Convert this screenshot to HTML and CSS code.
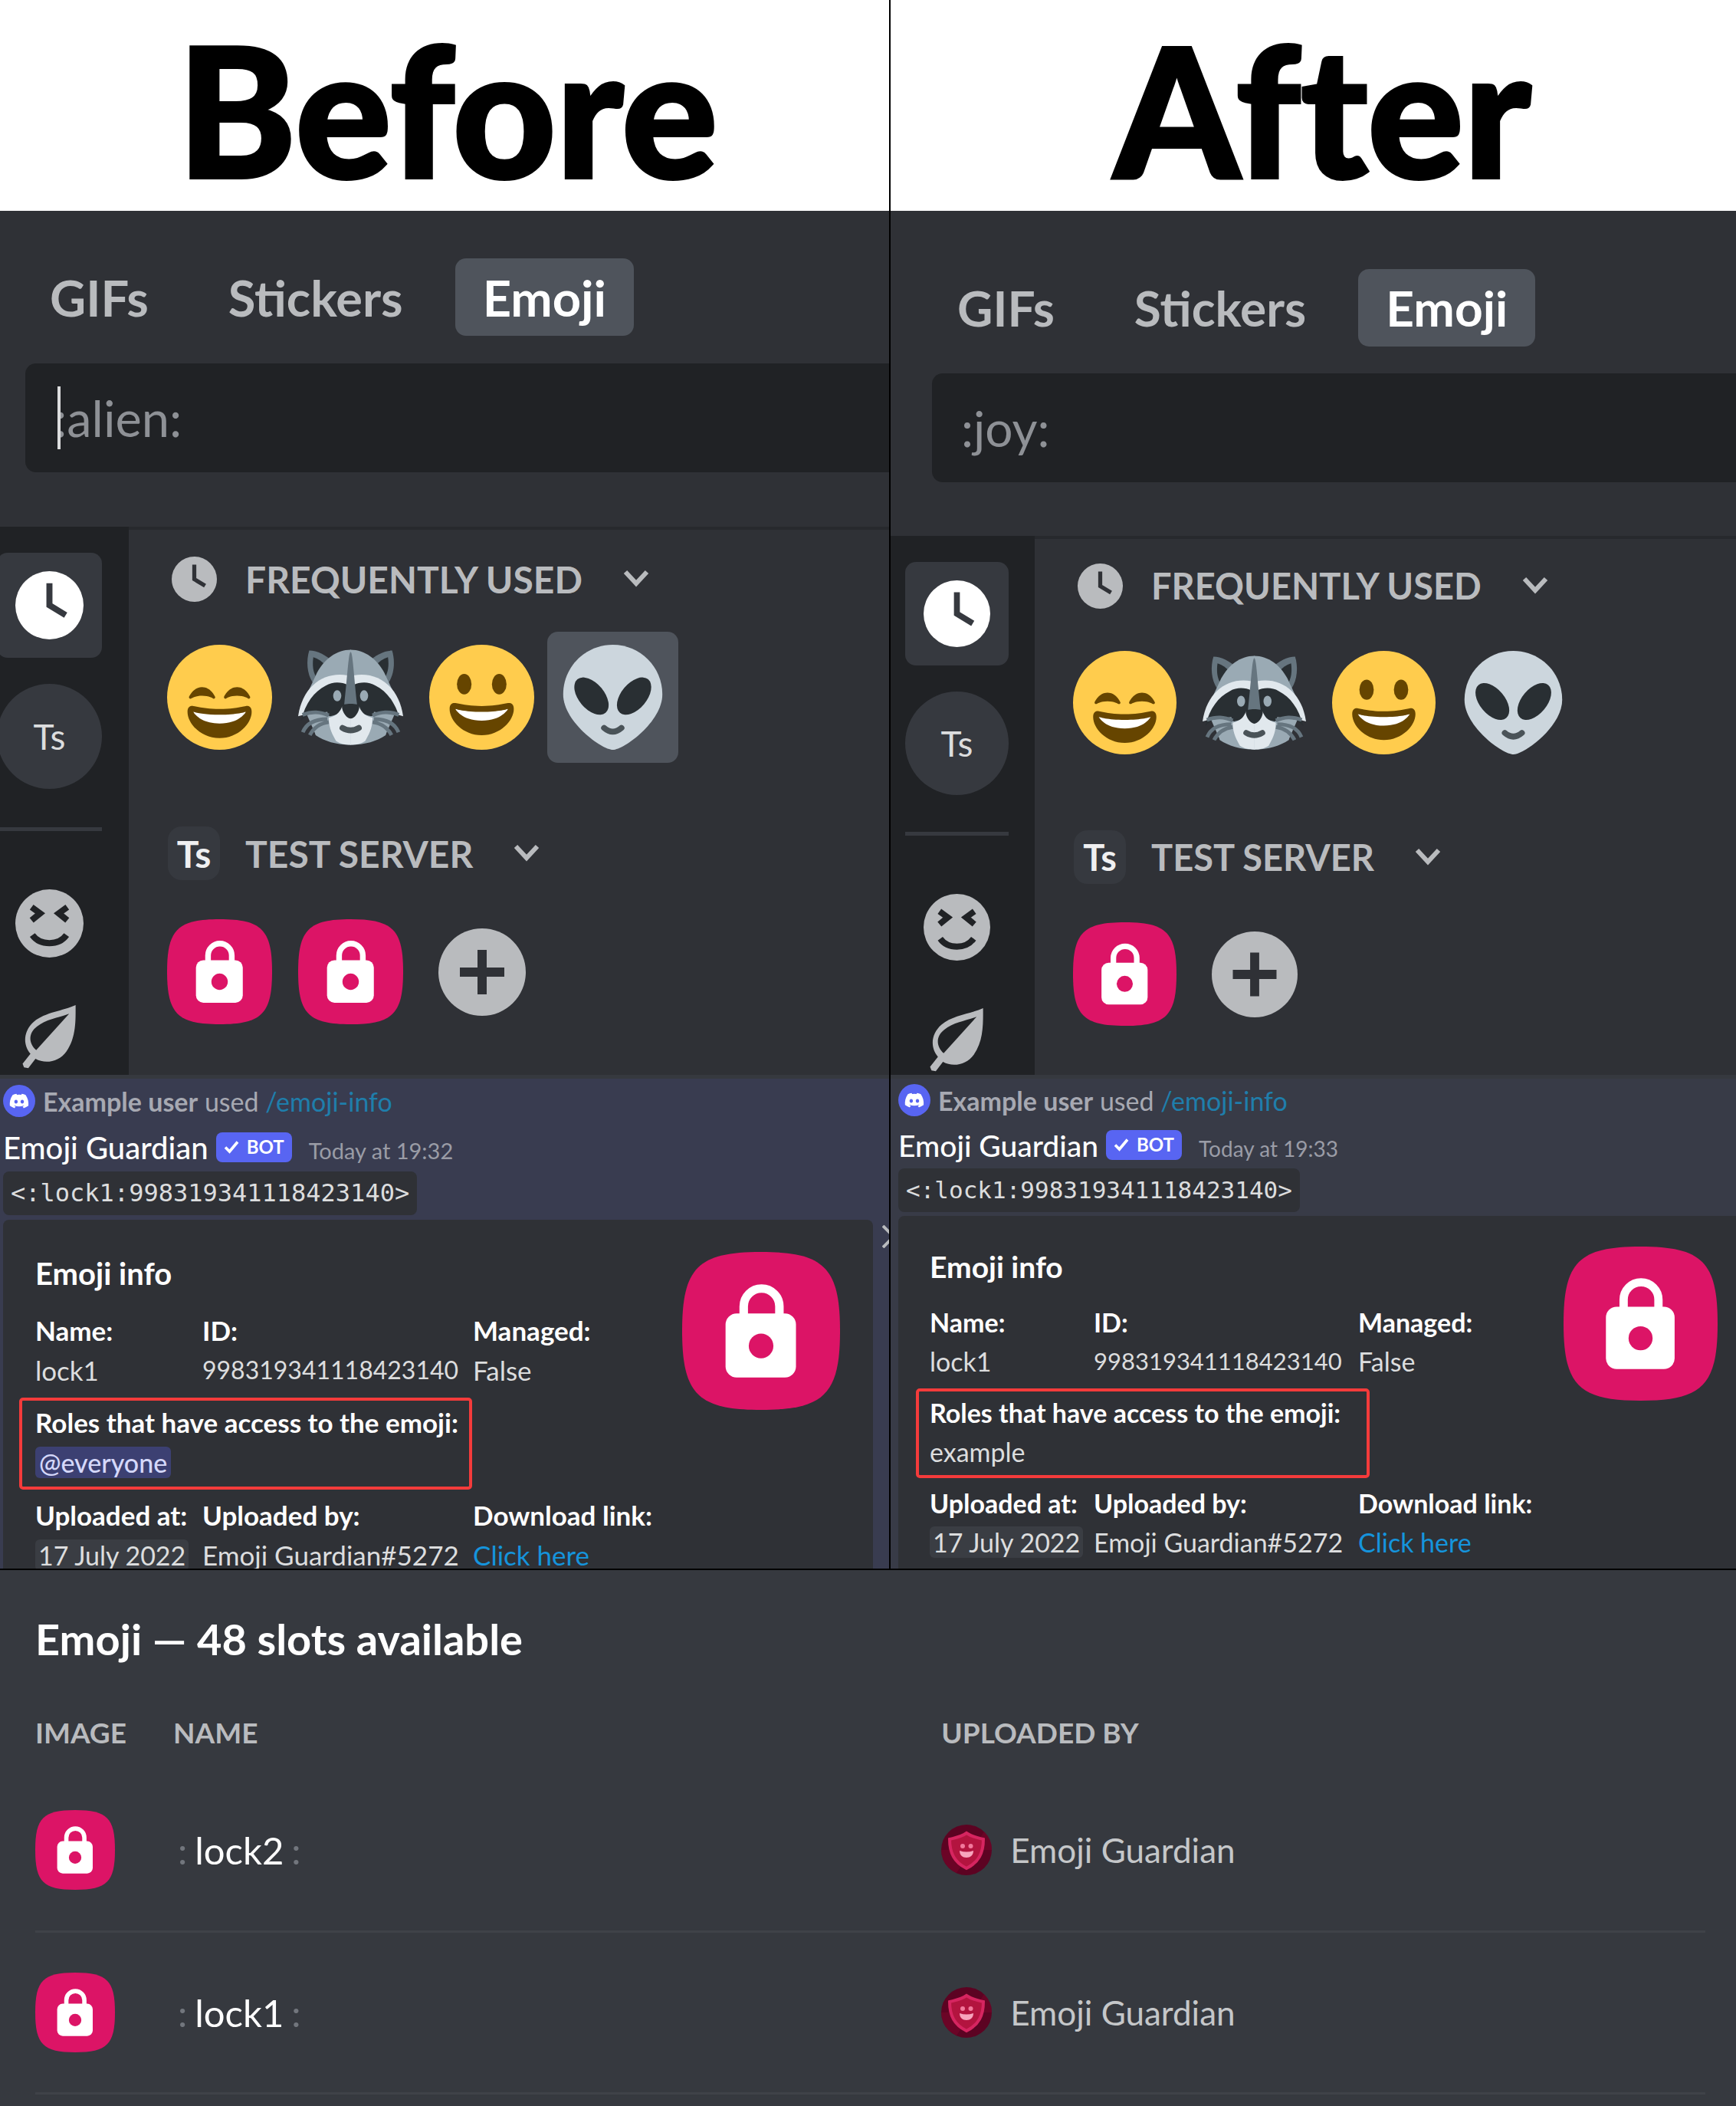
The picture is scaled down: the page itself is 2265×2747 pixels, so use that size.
FILE: index.html
```html
<!DOCTYPE html>
<html lang="en">
<head>
<meta charset="utf-8">
<meta name="viewport" content="width=device-width, initial-scale=1">
<title>Emoji Guardian: before and after</title>
<link rel="stylesheet" href="styles.css">
</head>
<body>
<svg class="defs" aria-hidden="true">
  <symbol id="clock" viewBox="0 0 90 90">
    <circle cx="45" cy="45" r="45" fill="currentColor"/>
    <path class="cut" d="M45 20v25l18 11" fill="none" stroke-width="8" stroke-linecap="square"/>
  </symbol>
  <symbol id="chevron" viewBox="0 0 34 24">
    <path d="M3 3l14 15L31 3" fill="none" stroke="currentColor" stroke-width="6"/>
  </symbol>
  <symbol id="xd" viewBox="0 0 88 88">
    <circle cx="44" cy="44" r="44" fill="currentColor"/>
    <path class="cut" d="M21 23l11 8-11 9M67 23l-11 8 11 9M22 59c10 14 34 14 44 0" fill="none" stroke-width="8"/>
  </symbol>
  <symbol id="leaf" viewBox="0 0 78 92">
    <path fill="currentColor" fill-rule="evenodd" d="M75 1C58 9 32 11 17 24C2 37 1 56 12 69L1 83l2 5 6 1 10-13c14 8 33 4 43-10C76 46 75 22 75 1ZM66 13L20 64C9 54 9 40 21 31C33 21 50 19 66 13Z"/>
  </symbol>
  <symbol id="plus" viewBox="0 0 114 114">
    <circle cx="57" cy="57" r="57" fill="currentColor"/>
    <path class="cut" d="M57 28v58M28 57h58" fill="none" stroke-width="12"/>
  </symbol>
  <symbol id="lock" viewBox="0 0 100 100">
    <path fill="#dc1466" d="M50 0C90 0 100 10 100 50S90 100 50 100 0 90 0 50 10 0 50 0Z"/>
    <path fill="none" stroke="#fff" stroke-width="5.4" d="M39 43V34.500a11.300 11.300 0 0 1 22.600 0V43"/>
    <rect x="27.500" y="39" width="44.600" height="40.500" rx="7" fill="#fff"/>
    <circle cx="50" cy="59.500" r="7.800" fill="#dc1466"/>
  </symbol>
  <symbol id="smile" viewBox="0 0 36 36">
    <circle cx="18" cy="18" r="18" fill="#ffcc4d"/>
    <path fill="#664500" d="M28.457 17.797c-.06-.135-1.499-3.297-4.457-3.297-2.957 0-4.397 3.162-4.457 3.297-.092.207-.032.449.145.591.175.142.426.147.61.014.012-.009 1.262-.902 3.702-.902 2.426 0 3.674.881 3.702.901.088.066.194.099.298.099.11 0 .221-.037.312-.109.177-.142.238-.386.145-.594zm-12 0c-.06-.135-1.499-3.297-4.457-3.297-2.957 0-4.397 3.162-4.457 3.297-.092.207-.032.449.144.591.176.142.427.147.61.014.013-.009 1.262-.902 3.703-.902 2.426 0 3.674.881 3.702.901.089.066.195.099.298.099.11 0 .221-.037.312-.109.178-.142.237-.386.145-.594zM18 22c-3.623 0-6.027-.422-9-1-.679-.131-2 0-2 2 0 4 4.595 9 11 9 6.404 0 11-5 11-9 0-2-1.321-2.132-2-2-2.973.578-5.377 1-9 1z"/>
    <path fill="#fff" d="M9 23s3 1 9 1 9-1 9-1-2 4-9 4-9-4-9-4z"/>
  </symbol>
  <symbol id="grin" viewBox="0 0 36 36">
    <circle cx="18" cy="18" r="18" fill="#ffcc4d"/>
    <path fill="#664500" d="M18 21c-3.623 0-6.027-.422-9-1-.679-.131-2 0-2 2 0 4 4.595 9 11 9 6.404 0 11-5 11-9 0-2-1.321-2.132-2-2-2.973.578-5.377 1-9 1z"/>
    <path fill="#fff" d="M9 22s3 1 9 1 9-1 9-1-2 4-9 4-9-4-9-4z"/>
    <ellipse cx="12" cy="13.500" rx="2.500" ry="3.500" fill="#664500"/>
    <ellipse cx="24" cy="13.500" rx="2.500" ry="3.500" fill="#664500"/>
  </symbol>
  <symbol id="alien" viewBox="0 0 36 36">
    <path fill="#ccd6dd" d="M35 17c0 9.389-13.223 19-17 19S1 26.389 1 17 8.611 0 18 0s17 7.611 17 17z"/>
    <ellipse cx="10.700" cy="17.600" rx="4.400" ry="7.500" transform="rotate(-40 10.700 17.600)" fill="#292f33"/>
    <ellipse cx="25.300" cy="17.600" rx="4.400" ry="7.500" transform="rotate(40 25.300 17.600)" fill="#292f33"/>
    <path d="M15 28.500q3 2.600 6 0" fill="none" stroke="#4a5358" stroke-width="2" stroke-linecap="round"/>
  </symbol>
  <symbol id="raccoon" viewBox="0 0 36 36">
    <g id="raccoon-half">
      <path fill="#66757f" d="M3.800 2C2.700 5.500 3 10 5 13l7-7C9.500 3.500 6.500 2 3.800 2z"/>
      <path fill="#292f33" d="M5.200 4.300c-.4 3 0 5 .8 6.500l3.500-3.500C8.400 5.800 6.800 4.800 5.200 4.300z"/>
      <path fill="#9aaab4" d="M18.100 1.700C13 1.700 9 5 6.500 9.500L3 17l3 14c3 2 7 3.300 12.100 3.300z"/>
      <path fill="#e1e8ed" d="M17 10.500C9 9 1.500 14 0 24.500c4-1 8-2 17-9z"/>
      <path fill="#292f33" d="M17 13.800c-2-1-5-1.300-7.500.2C5.500 16 2.500 20 1 26c3-3 6.500-3 10-1.500 3-.5 5.500-2 7-4z"/>
      <path fill="#9aaab4" d="M3 24l7-1 2 9-6-1.200z"/>
      <path fill="none" stroke="#66757f" stroke-width="1.300" d="M1.500 24c3.500-1.300 6-1 9 .2M1.600 30c1.200-3 4-4.500 8.400-4.500M4 31c1-2 3-4 6.500-4.500"/>
      <path fill="#e1e8ed" d="M18.100 21h-3c-.5 1.500-1.500 3.300-4.600 4 0 4 1.500 6 2.500 8 1.500 1 3 1.300 5.100 1.300z"/>
    </g>
    <use href="#raccoon-half" transform="matrix(-1 0 0 1 36 0)"/>
    <path fill="#66757f" d="M18 2.500c-.7 0-1 7-2.200 18h4.400C19 9.500 18.700 2.500 18 2.500z"/>
    <ellipse cx="13.400" cy="17.500" rx="1.400" ry="1.900" fill="#9aaab4"/>
    <ellipse cx="22.600" cy="17.500" rx="1.400" ry="1.900" fill="#9aaab4"/>
    <path fill="#292f33" d="M15 21c0-1 6-1 6 0 0 2.200-1.800 4.300-3 4.300S15 23.200 15 21z"/>
    <path fill="none" stroke="#4a5358" stroke-width="2" stroke-linecap="round" d="M15.200 28.500q2.800 1.700 5.600 0"/>
  </symbol>
  <symbol id="discord" viewBox="0 0 42 42">
    <circle cx="21" cy="21" r="21" fill="#5865f2"/>
    <path fill="#fff" transform="translate(7.800 11.700) scale(.94)" d="M23.021 1.677C21.311.88 19.508.319 17.658 0c-.252.462-.483.935-.687 1.418a19.800 19.800 0 0 0-5.943 0A16 16 0 0 0 10.337.005 22 22 0 0 0 4.967 1.682C1.567 6.779.65 11.754 1.111 16.652A21 21 0 0 0 7.692 20c.531-.726 1.003-1.501 1.406-2.309a13 13 0 0 1-2.221-1.078c.188-.137.370-.274.547-.428a15.400 15.400 0 0 0 13.152 0c.177.149.359.291.541.428a13 13 0 0 1-2.220 1.078c.408.808.875 1.578 1.405 2.304a21 21 0 0 0 6.581-3.348c.547-5.680-.917-10.600-3.862-14.970zM9.680 13.638c-1.283 0-2.339-1.193-2.339-2.644s1.030-2.644 2.339-2.644 2.359 1.193 2.338 2.644c0 1.451-1.036 2.644-2.338 2.644zm8.636 0c-1.283 0-2.340-1.193-2.340-2.644s1.036-2.644 2.340-2.644 2.359 1.193 2.338 2.644c0 1.451-1.036 2.644-2.338 2.644z"/>
  </symbol>
  <symbol id="check" viewBox="0 0 20 18">
    <path d="M2 9.500l5.500 5.500L18 2.500" fill="none" stroke="#fff" stroke-width="3.600"/>
  </symbol>
  <symbol id="guardian" viewBox="0 0 66 66">
    <circle cx="33" cy="33" r="33" fill="#5c0322"/>
    <path d="M0 33a33 33 0 0 0 20 30L56 9A33 33 0 0 1 66 33" fill="#74052a" opacity=".6"/>
    <path d="M33 11c7 5 14 6 22 8 0 18-6 30-22 38C17 49 11 37 11 19c8-2 15-3 22-8z" fill="#b3143f" stroke="#d62560" stroke-width="4"/>
    <circle cx="28" cy="28" r="3" fill="#f2799c"/>
    <circle cx="38.500" cy="28" r="3" fill="#f2799c"/>
    <path d="M24 34q9 3 18 0c0 6-4 9-9 9s-9-3-9-9z" fill="#f7a5bd"/>
  </symbol>
</svg>

<main>
  <div class="compare">
    <section class="side before">
      <h1 class="side-title">Before</h1>
      <div class="picker">
        <div class="tabs">
          <button class="tab" type="button">GIFs</button>
          <button class="tab" type="button">Stickers</button>
          <button class="tab active" type="button">Emoji</button>
        </div>
        <div class="search">
          <input class="search-input" type="text" aria-label="Search emoji" placeholder=":alien:">
          <span class="caret"></span>
        </div>
        <div class="picker-body">
          <nav class="rail" aria-label="Emoji categories">
            <button class="rail-button recent" type="button" aria-label="Frequently used"><svg class="rail-icon"><use href="#clock"/></svg></button>
            <button class="rail-button server" type="button">Ts</button>
            <span class="rail-divider"></span>
            <button class="rail-category" type="button" aria-label="People"><svg class="rail-icon"><use href="#xd"/></svg></button>
            <button class="rail-category" type="button" aria-label="Nature"><svg class="leaf-icon"><use href="#leaf"/></svg></button>
          </nav>
          <div class="groups">
            <section class="group">
              <h2 class="group-head"><span class="group-icon"><svg class="group-clock"><use href="#clock"/></svg></span>FREQUENTLY USED<svg class="chevron"><use href="#chevron"/></svg></h2>
              <div class="cells">
                <button class="cell" type="button" aria-label="smile"><svg class="emoji"><use href="#smile"/></svg></button>
                <button class="cell" type="button" aria-label="raccoon"><svg class="emoji"><use href="#raccoon"/></svg></button>
                <button class="cell" type="button" aria-label="smiley"><svg class="emoji"><use href="#grin"/></svg></button>
                <button class="cell selected" type="button" aria-label="alien"><svg class="emoji"><use href="#alien"/></svg></button>
              </div>
            </section>
            <section class="group">
              <h2 class="group-head"><span class="group-icon badge">Ts</span>TEST SERVER<svg class="chevron"><use href="#chevron"/></svg></h2>
              <div class="cells">
                <button class="cell" type="button" aria-label="lock1"><svg class="emoji"><use href="#lock"/></svg></button>
                <button class="cell" type="button" aria-label="lock2"><svg class="emoji"><use href="#lock"/></svg></button>
                <button class="cell" type="button" aria-label="Add emoji"><svg class="add"><use href="#plus"/></svg></button>
              </div>
            </section>
          </div>
        </div>
      </div>
      <article class="message">
        <p class="reply"><svg class="reply-avatar"><use href="#discord"/></svg><span class="reply-text"><b>Example user</b> used <a href="#command">/emoji-info</a></span></p>
        <header class="author"><span class="author-name">Emoji Guardian</span><span class="bot"><svg class="check"><use href="#check"/></svg>BOT</span><time class="stamp">Today at 19:32</time></header>
        <code class="code">&lt;:lock1:998319341118423140&gt;</code>
        <div class="embed">
          <div class="embed-main">
            <h3 class="embed-title">Emoji info</h3>
            <dl class="fields">
              <div><dt>Name:</dt><dd>lock1</dd></div>
              <div><dt>ID:</dt><dd class="digits">998319341118423140</dd></div>
              <div><dt>Managed:</dt><dd>False</dd></div>
              <div class="roles"><dt>Roles that have access to the emoji:</dt><dd><span class="mention">@everyone</span></dd></div>
              <div><dt>Uploaded at:</dt><dd><span class="date">17 July 2022</span></dd></div>
              <div><dt>Uploaded by:</dt><dd>Emoji Guardian#5272</dd></div>
              <div><dt>Download link:</dt><dd><a href="#download">Click here</a></dd></div>
            </dl>
          </div>
          <svg class="thumb"><use href="#lock"/></svg>
        </div>
        <svg class="dismiss" viewBox="0 0 30 30"><path d="M1 1l28 28M29 1L1 29" fill="none" stroke="#b9bbbe" stroke-width="4"/></svg>
      </article>
    </section>

    <section class="side after">
      <h1 class="side-title">After</h1>
      <div class="picker">
        <div class="tabs">
          <button class="tab" type="button">GIFs</button>
          <button class="tab" type="button">Stickers</button>
          <button class="tab active" type="button">Emoji</button>
        </div>
        <div class="search">
          <input class="search-input" type="text" aria-label="Search emoji" placeholder=":joy:">
        </div>
        <div class="picker-body">
          <nav class="rail" aria-label="Emoji categories">
            <button class="rail-button recent" type="button" aria-label="Frequently used"><svg class="rail-icon"><use href="#clock"/></svg></button>
            <button class="rail-button server" type="button">Ts</button>
            <span class="rail-divider"></span>
            <button class="rail-category" type="button" aria-label="People"><svg class="rail-icon"><use href="#xd"/></svg></button>
            <button class="rail-category" type="button" aria-label="Nature"><svg class="leaf-icon"><use href="#leaf"/></svg></button>
          </nav>
          <div class="groups">
            <section class="group">
              <h2 class="group-head"><span class="group-icon"><svg class="group-clock"><use href="#clock"/></svg></span>FREQUENTLY USED<svg class="chevron"><use href="#chevron"/></svg></h2>
              <div class="cells">
                <button class="cell" type="button" aria-label="smile"><svg class="emoji"><use href="#smile"/></svg></button>
                <button class="cell" type="button" aria-label="raccoon"><svg class="emoji"><use href="#raccoon"/></svg></button>
                <button class="cell" type="button" aria-label="smiley"><svg class="emoji"><use href="#grin"/></svg></button>
                <button class="cell" type="button" aria-label="alien"><svg class="emoji"><use href="#alien"/></svg></button>
              </div>
            </section>
            <section class="group">
              <h2 class="group-head"><span class="group-icon badge">Ts</span>TEST SERVER<svg class="chevron"><use href="#chevron"/></svg></h2>
              <div class="cells">
                <button class="cell" type="button" aria-label="lock1"><svg class="emoji"><use href="#lock"/></svg></button>
                <button class="cell" type="button" aria-label="Add emoji"><svg class="add"><use href="#plus"/></svg></button>
              </div>
            </section>
          </div>
        </div>
      </div>
      <article class="message">
        <p class="reply"><svg class="reply-avatar"><use href="#discord"/></svg><span class="reply-text"><b>Example user</b> used <a href="#command">/emoji-info</a></span></p>
        <header class="author"><span class="author-name">Emoji Guardian</span><span class="bot"><svg class="check"><use href="#check"/></svg>BOT</span><time class="stamp">Today at 19:33</time></header>
        <code class="code">&lt;:lock1:998319341118423140&gt;</code>
        <div class="embed">
          <div class="embed-main">
            <h3 class="embed-title">Emoji info</h3>
            <dl class="fields">
              <div><dt>Name:</dt><dd>lock1</dd></div>
              <div><dt>ID:</dt><dd class="digits">998319341118423140</dd></div>
              <div><dt>Managed:</dt><dd>False</dd></div>
              <div class="roles"><dt>Roles that have access to the emoji:</dt><dd>example</dd></div>
              <div><dt>Uploaded at:</dt><dd><span class="date">17 July 2022</span></dd></div>
              <div><dt>Uploaded by:</dt><dd>Emoji Guardian#5272</dd></div>
              <div><dt>Download link:</dt><dd><a href="#download">Click here</a></dd></div>
            </dl>
          </div>
          <svg class="thumb"><use href="#lock"/></svg>
        </div>
      </article>
    </section>
  </div>

  <section class="slots">
    <h2 class="slots-title">Emoji — 48 slots available</h2>
    <table class="slots-table">
      <colgroup><col class="col-image"><col class="col-name"><col></colgroup>
      <thead><tr><th scope="col">IMAGE</th><th scope="col">NAME</th><th scope="col">UPLOADED BY</th></tr></thead>
      <tbody>
        <tr>
          <td><svg class="slot-image"><use href="#lock"/></svg></td>
          <td><span class="alias">:<input class="alias-input" type="text" size="5" aria-label="Emoji name" value="lock2">:</span></td>
          <td><span class="uploader"><svg class="uploader-avatar"><use href="#guardian"/></svg>Emoji Guardian</span></td>
        </tr>
        <tr>
          <td><svg class="slot-image"><use href="#lock"/></svg></td>
          <td><span class="alias">:<input class="alias-input" type="text" size="5" aria-label="Emoji name" value="lock1">:</span></td>
          <td><span class="uploader"><svg class="uploader-avatar"><use href="#guardian"/></svg>Emoji Guardian</span></td>
        </tr>
      </tbody>
    </table>
  </section>
</main>
</body>
</html>
```

FILE: styles.css
```css
* { box-sizing: border-box; }

body {
  margin: 0;
  background: #36393f;
  color: #dcddde;
  font-family: Lato, "Open Sans", sans-serif;
}

h1, h2, h3, p, dl, dd { margin: 0; }
a { color: inherit; text-decoration: none; }
svg { display: block; flex: none; }
button, input { border: 0; padding: 0; background: none; color: inherit; font: inherit; }

.defs { position: absolute; width: 0; height: 0; }

/* Two columns, before and after */
.compare {
  display: grid;
  grid-template-columns: minmax(0, 1160fr) minmax(0, 1105fr);
  border-bottom: 2px solid #000;
}

.before {
  --cell: 171px;
  --emoji: 137px;
  --add: 114px;
  --tab-size: 65px;
  --search-size: 65px;
  --head-size: 48px;
  --head-height: 114px;
  --rail: 168px;
  --rail-pad: 35px;
  --rail-button: 137px;
  --rail-icon: 89px;
  --rail-gap: 50px;
  --author-size: 40px;
  --text-size: 35px;
  --id-size: 32px;
  --stamp-size: 29px;
  --code-size: 32px;
  --line: 52px;
  --col-1: 218px;
  --col-2: 353px;
  --thumb: 206px;
}

.after {
  --cell: 169px;
  --emoji: 135px;
  --add: 112px;
  --tab-size: 64px;
  --search-size: 64px;
  --head-size: 47px;
  --head-height: 112px;
  --rail: 188px;
  --rail-pad: 34px;
  --rail-button: 135px;
  --rail-icon: 87px;
  --rail-gap: 48px;
  --author-size: 39px;
  --text-size: 34px;
  --id-size: 31px;
  --stamp-size: 28px;
  --code-size: 31px;
  --line: 51px;
  --col-1: 214px;
  --col-2: 345px;
  --thumb: 201px;
  border-left: 2px solid #000;
}

.side-title {
  height: 275px;
  padding: 8px 0 0 8px;
  background: #fff;
  color: #000;
  font-size: 234px;
  font-weight: 900;
  font-variant-ligatures: none;
  line-height: 267px;
  text-align: center;
  -webkit-text-stroke: 4px #000;
  stroke-linejoin: round;
}
.after .side-title { padding-left: 24px; }

/* Emoji picker */
.picker {
  display: flex;
  flex-direction: column;
  min-height: 1127px;
  padding-top: 62px;
  background: #2f3136;
}
.after .picker { padding-top: 76px; }

.tabs { display: flex; gap: 32px; padding-left: 29px; }
.after .tabs { padding-left: 51px; }

.tab {
  height: 101px;
  padding: 0 36px;
  border-radius: 14px;
  color: #b9bbbe;
  font-size: var(--tab-size);
  font-weight: 700;
}
.tab.active { background: #4f545c; color: #fff; }

.search { position: relative; margin: 36px 0 71px 33px; }
.after .search { margin: 35px 0 70px 54px; }

.search-input {
  display: block;
  width: 100%;
  height: 142px;
  padding-left: 38px;
  border-radius: 14px 0 0 14px;
  background: #202225;
  font-size: var(--search-size);
}
.search-input::placeholder { color: #8e9196; opacity: 1; }

.caret {
  position: absolute;
  top: 30px;
  left: 42px;
  width: 4px;
  height: 82px;
  background: #dcddde;
}

.picker-body { display: flex; flex: 1; }

.rail {
  display: flex;
  flex: none;
  flex-direction: column;
  align-items: flex-end;
  width: var(--rail);
  padding: 34px var(--rail-pad) 0 0;
  overflow: hidden;
  background: #202225;
}

.rail-button {
  display: flex;
  align-items: center;
  justify-content: center;
  width: var(--rail-button);
  height: var(--rail-button);
  background: #36393f;
}
.rail-button.recent { border-radius: 14px; color: #fff; --cut: #36393f; }
.rail-button.server { margin-top: 34px; border-radius: 50%; font-size: 46px; }

.rail-divider {
  width: var(--rail-button);
  height: 5px;
  margin: var(--rail-gap) 0 15px;
  background: #36393f;
}

.rail-category {
  display: flex;
  justify-content: center;
  width: var(--rail-button);
  margin-top: 61px;
  color: #b9bbbe;
  --cut: #202225;
}

.rail-icon { width: var(--rail-icon); height: var(--rail-icon); }
.leaf-icon { width: 74px; height: 86px; }
.cut { stroke: var(--cut, #2f3136); }

.groups {
  flex: 1;
  padding: 7px 0 0 33px;
  border-top: 4px solid #27292d;
}
.after .groups { padding-top: 5px; }

.group + .group { margin-top: 61px; }

.group-head {
  display: flex;
  align-items: center;
  height: var(--head-height);
  margin-bottom: 12px;
  padding-left: 18px;
  color: #b9bbbe;
  font-size: var(--head-size);
  font-weight: 700;
  white-space: nowrap;
}

.group-icon {
  display: flex;
  align-items: center;
  justify-content: center;
  width: 68px;
  height: 70px;
  margin-right: 33px;
}
.group-icon.badge { border-radius: 18px; background: #36393f; color: #f0f0f1; }
.group-clock { width: 59px; height: 59px; }
.chevron { width: 34px; height: 24px; margin-left: 53px; }

.cells { display: flex; }

.cell {
  display: flex;
  align-items: center;
  justify-content: center;
  width: var(--cell);
  height: var(--cell);
  border-radius: 14px;
}
.cell.selected { background: #4f545c; }
.emoji { width: var(--emoji); height: var(--emoji); }
.add { width: var(--add); height: var(--add); color: #b9bbbe; --cut: #2f3136; }

/* Bot message */
.message {
  position: relative;
  height: 644px;
  padding: 8px 21px 0 4px;
  overflow: hidden;
  border-top: 5px solid #36393f;
  background: #393c50;
}
.after .message { padding: 7px 0 0 10px; background: #383b47; }

.reply {
  display: flex;
  align-items: center;
  gap: 10px;
  height: 42px;
  color: #a7a9b2;
  font-size: 34px;
  white-space: nowrap;
}
.reply-avatar { width: 42px; height: 42px; }
.reply a { color: #1f7eab; }

.author {
  display: flex;
  align-items: baseline;
  height: 40px;
  margin: 19px 0 12px;
  line-height: 42px;
  white-space: nowrap;
}
.after .author { margin: 17px 0 11px; }
.author-name { color: #fff; font-size: var(--author-size); font-weight: 500; }

.bot {
  display: flex;
  align-items: center;
  align-self: center;
  gap: 10px;
  height: 39px;
  margin: 0 22px 0 10px;
  padding: 0 10px;
  border-radius: 8px;
  background: #5865f2;
  color: #fff;
  font-size: 24px;
  font-weight: 700;
}
.check { width: 20px; height: 18px; }
.stamp { color: #9a9ca6; font-size: var(--stamp-size); }

.code {
  display: block;
  width: fit-content;
  padding: 0 10px;
  border-radius: 8px;
  background: #2f3136;
  font-family: "DejaVu Sans Mono", monospace;
  font-size: var(--code-size);
  line-height: 57px;
}

.embed {
  display: flex;
  align-items: flex-start;
  min-height: 480px;
  margin-top: 6px;
  padding: 42px 43px 0 42px;
  border-radius: 8px;
  background: #2f3136;
}
.after .embed { margin-top: 5px; padding: 40px 24px 0 41px; border-radius: 8px 0 0; }
.embed-main { flex: 1; min-width: 0; white-space: nowrap; }

.embed-title {
  margin: 4px 0 24px;
  color: #fff;
  font-size: var(--author-size);
  font-weight: 700;
  line-height: 48px;
}
.after .embed-title { margin: 2px 0 23px; }

.fields {
  display: grid;
  grid-template-columns: var(--col-1) var(--col-2) 1fr;
  row-gap: 16px;
  font-size: var(--text-size);
  line-height: var(--line);
}
.fields dt { color: #fff; font-weight: 700; }
.fields a { color: #1594dc; }
.fields .digits { font-size: var(--id-size); }

.roles {
  grid-column: 1 / -1;
  justify-self: start;
  margin: -6px -21px -9px;
  padding: 2px 14px 5px 17px;
  border: 4px solid #f43b3b;
  border-radius: 5px;
}
.after .roles { margin-left: -18px; padding: 2px 34px 5px 14px; }

.mention {
  padding: 0 5px;
  border-radius: 6px;
  background: #3c4072;
  color: #d5d8fa;
  font-size: 34px;
  font-weight: 500;
}
.date { padding: 0 4px; border-radius: 6px; background: #3a3d43; font-size: 34px; }

.thumb { width: var(--thumb); height: var(--thumb); }

.dismiss {
  position: absolute;
  top: 191px;
  right: -21px;
  width: 30px;
  height: 30px;
}

/* Emoji slots */
.slots { padding: 59px 40px 12px 46px; }

.slots-title {
  margin-bottom: 69px;
  color: #fff;
  font-size: 56px;
  font-weight: 700;
  line-height: 62px;
}

.slots-table {
  width: 100%;
  table-layout: fixed;
  border-collapse: collapse;
}
.col-image { width: 180px; }
.col-name { width: 46%; }

.slots-table th {
  height: 70px;
  padding: 0;
  color: #b9bbbe;
  font-size: 37px;
  font-weight: 700;
  line-height: 44px;
  text-align: left;
  vertical-align: top;
}

.slots-table td {
  height: 211px;
  padding: 0;
  border-bottom: 3px solid #3f4248;
  vertical-align: middle;
}

.slot-image { width: 104px; height: 104px; }

.alias {
  display: flex;
  align-items: center;
  gap: 10px;
  padding-left: 6px;
  color: #72767d;
  font-size: 49px;
}
.alias-input { field-sizing: content; color: #fff; }

.uploader {
  display: flex;
  align-items: center;
  gap: 24px;
  color: #c5c7c9;
  font-size: 44px;
}
.uploader-avatar { width: 66px; height: 66px; }
```
